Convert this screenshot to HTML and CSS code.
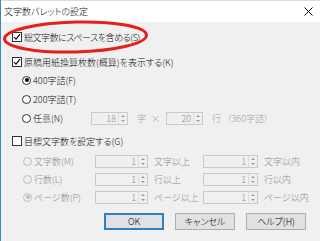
FILE: index.html
```html
<!DOCTYPE html>
<html lang="ja">
<head>
<meta charset="UTF-8">
<meta name="viewport" content="width=device-width, initial-scale=1.0">
<title>文字数パレットの設定</title>
<link rel="stylesheet" href="styles.css">
</head>
<body>
<div class="dialog">
    <div class="titlebar">
        <span class="title">文字数パレットの設定</span>
        <svg class="close" width="9" height="9" viewBox="0 0 9 9"><path d="M0.5 0.5 L8.5 8.5 M8.5 0.5 L0.5 8.5" stroke="#000" stroke-width="1" fill="none"/></svg>
    </div>
    <div class="content">
        <div class="row row-s">
            <span class="check"><svg width="8" height="8" viewBox="0 0 8 8"><path d="M1 4 L3 6.2 L7 1.2" stroke="#000" stroke-width="1.1" fill="none"/></svg></span>
            <span class="tight">総文字数にスペースを含める(S)</span>
        </div>
        <div class="row row-k">
            <span class="check"><svg width="8" height="8" viewBox="0 0 8 8"><path d="M1 4 L3 6.2 L7 1.2" stroke="#000" stroke-width="1.1" fill="none"/></svg></span>
            <span>原稿用紙換算枚数(概算)を表示する(K)</span>
        </div>
        <div class="row option">
            <span class="radio on"></span>
            <span>400字詰(F)</span>
        </div>
        <div class="row option">
            <span class="radio"></span>
            <span>200字詰(T)</span>
        </div>
        <div class="row option custom">
            <span class="radio"></span>
            <span class="custom-label">任意(N)</span>
            <div class="spin small"><span class="value">18</span><span class="arrows"></span></div>
            <span class="dim unit">字</span>
            <span class="dim times">×</span>
            <div class="spin small"><span class="value">20</span><span class="arrows"></span></div>
            <span class="dim unit">行</span>
            <span class="dim total">（360字詰）</span>
        </div>
        <div class="row row-g">
            <span class="check"></span>
            <span>目標文字数を設定する(G)</span>
        </div>
        <div class="targets">
            <div class="target">
                <span class="t-label"><span class="radio off"></span>文字数(M)</span>
                <div class="spin"><span class="value">1</span><span class="arrows"></span></div>
                <span class="t-text">文字以上</span>
                <div class="spin wide"><span class="value">1</span><span class="arrows"></span></div>
                <span class="t-text">文字以内</span>
            </div>
            <div class="target">
                <span class="t-label"><span class="radio off"></span>行数(L)</span>
                <div class="spin"><span class="value">1</span><span class="arrows"></span></div>
                <span class="t-text">行以上</span>
                <div class="spin wide"><span class="value">1</span><span class="arrows"></span></div>
                <span class="t-text">行以内</span>
            </div>
            <div class="target">
                <span class="t-label"><span class="radio off on"></span>ページ数(P)</span>
                <div class="spin"><span class="value">1</span><span class="arrows"></span></div>
                <span class="t-text">ページ以上</span>
                <div class="spin wide"><span class="value">1</span><span class="arrows"></span></div>
                <span class="t-text">ページ以内</span>
            </div>
        </div>
    </div>
    <div class="buttons">
        <button class="default">OK</button>
        <button>キャンセル</button>
        <button>ヘルプ(H)</button>
    </div>
    <svg class="mark" width="320" height="60" viewBox="0 0 320 60">
        <ellipse cx="75.5" cy="37" rx="71" ry="15" transform="rotate(-1.5 75.5 37)" fill="none" stroke="#e3201c" stroke-width="3"/>
    </svg>
</div>
</body>
</html>
```

FILE: styles.css
```css
body {
    margin: 0;
    overflow: hidden;
    font-family: "Noto Sans CJK JP", "Noto Sans", sans-serif;
    font-size: 9px;
    font-weight: 300;
    font-feature-settings: "palt";
    color: #111;
}

.dialog {
    position: relative;
    width: 320px;
    height: 241px;
    box-sizing: border-box;
    border-left: 1px solid #3d86b9;
    background-color: #f0f0f0;
}

.titlebar {
    height: 22px;
    display: flex;
    align-items: center;
    justify-content: space-between;
    padding: 0 7px 0 3px;
    background-color: #fff;
    border-top: 1px solid #dcdcdc;
    box-sizing: border-box;
}

.content {
    padding-left: 11px;
}

.row {
    height: 18px;
    display: flex;
    align-items: center;
}

.row-s {
    margin-top: 6px;
}

.tight {
    letter-spacing: -0.45px;
}

.row-k {
    margin-top: 7px;
}

.row-g {
    margin-top: 5px;
}

.check {
    width: 10px;
    height: 10px;
    box-sizing: border-box;
    border: 1px solid #333;
    background-color: #fff;
    margin-right: 2px;
    display: flex;
    align-items: center;
    justify-content: center;
}

.option {
    padding-left: 10px;
}

.option + .option {
    margin-top: 1px;
}

.radio {
    position: relative;
    width: 9px;
    height: 9px;
    box-sizing: border-box;
    border: 1px solid #333;
    border-radius: 50%;
    background-color: #fff;
    margin-right: 2px;
    flex-shrink: 0;
}

.radio.on::after {
    content: "";
    position: absolute;
    left: 1.5px;
    top: 1.5px;
    width: 4px;
    height: 4px;
    border-radius: 50%;
    background-color: #000;
}

.radio.off {
    border-color: #bcbcbc;
    background-color: #f0f0f0;
}

.radio.off.on::after {
    background-color: #bcbcbc;
}

.custom-label {
    width: 58px;
}

.dim {
    color: #a0a0a0;
}

.spin {
    height: 13px;
    box-sizing: border-box;
    border: 1px solid #cacaca;
    display: flex;
    color: #8d8d8d;
}

.spin .value {
    flex: 1;
    text-align: right;
    padding-right: 2px;
    line-height: 11px;
}

.spin .arrows {
    position: relative;
    width: 8px;
    border-left: 1px solid #dcdcdc;
}

.spin .arrows::before,
.spin .arrows::after {
    content: "";
    position: absolute;
    left: 2px;
    border-left: 2px solid transparent;
    border-right: 2px solid transparent;
}

.spin .arrows::before {
    top: 2px;
    border-bottom: 2px solid #9a9a9a;
}

.spin .arrows::after {
    bottom: 2px;
    border-top: 2px solid #9a9a9a;
}

.spin.small {
    width: 37px;
}

.unit {
    margin-left: 9px;
}

.times {
    margin: 0 6px 0 5px;
}

.total {
    margin-left: 6px;
}

.targets {
    margin-top: 2px;
    padding-left: 11px;
}

.target {
    height: 18px;
    display: grid;
    grid-template-columns: 72px 53px 55px 55px auto;
    align-items: center;
    color: #8d8d8d;
}

.t-label {
    display: flex;
    align-items: center;
}

.spin.wide {
    width: 55px;
}

.t-text {
    padding-left: 6px;
}

.buttons {
    display: flex;
    justify-content: flex-end;
    gap: 11px;
    padding-right: 14px;
    margin-top: 7px;
}

button {
    width: 60px;
    height: 17px;
    padding: 0;
    font-family: inherit;
    font-size: 9px;
    font-weight: 300;
    font-feature-settings: "palt";
    color: #000;
    background-color: #e1e1e1;
    border: 1px solid #adadad;
}

button.default {
    border: 2px solid #2f7fc2;
}

.mark {
    position: absolute;
    left: -1px;
    top: 0;
    pointer-events: none;
}
```
